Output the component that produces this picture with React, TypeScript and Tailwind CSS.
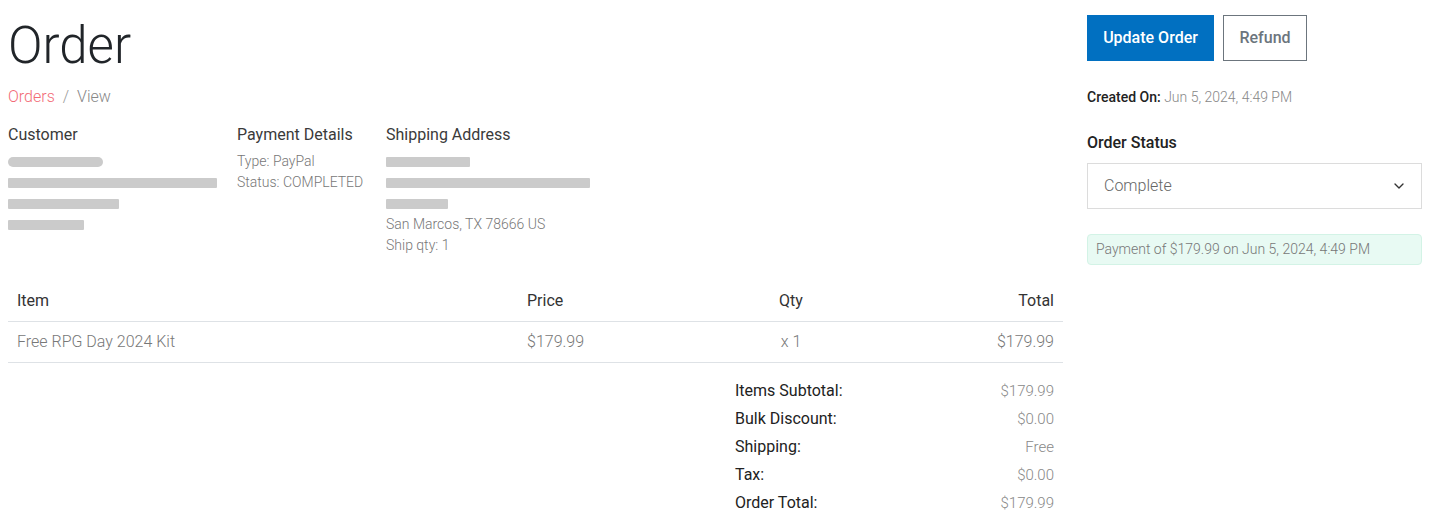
import { ChevronDown } from "lucide-react";

const Redact = ({ w, pill = false }: { w: number; pill?: boolean }) => (
  <div className="h-[21px] flex items-center">
    <div
      className={`h-[10px] bg-[#cbcbcb] ${pill ? "rounded-full" : "rounded-[1px]"}`}
      style={{ width: w }}
    />
  </div>
);

const Line = ({ children }: { children: React.ReactNode }) => (
  <div className="h-[21px] leading-[21px] text-[14px] font-light text-[#777]">{children}</div>
);

const totals = [
  ["Items Subtotal:", "$179.99"],
  ["Bulk Discount:", "$0.00"],
  ["Shipping:", "Free"],
  ["Tax:", "$0.00"],
  ["Order Total:", "$179.99"],
];

export default function App() {
  return (
    <div className="flex gap-6 px-2 bg-white font-['Roboto',sans-serif] text-[#212529] min-h-[531px]">
      {/* left side */}
      <div className="w-[1055px] shrink-0">
        <h1 className="mt-[15px] text-[51px] leading-[1.2] font-light text-[#212529]">Order</h1>
        <div className="mt-[9px] h-6 leading-6 text-base font-light">
          <span className="text-[#f26b76]">Orders</span>
          <span className="text-[#999] mx-2">/</span>
          <span className="text-[#888]">View</span>
        </div>

        <div className="mt-[14px] flex">
          <div className="w-[229px]">
            <div className="h-6 leading-6 text-base text-[#3a3a3a]">Customer</div>
            <div className="mt-1">
              <Redact w={95} pill />
              <Redact w={209} />
              <Redact w={111} />
              <Redact w={76} />
            </div>
          </div>
          <div className="w-[149px]">
            <div className="h-6 leading-6 text-base text-[#3a3a3a]">Payment Details</div>
            <div className="mt-1">
              <Line>Type: PayPal</Line>
              <Line>Status: COMPLETED</Line>
            </div>
          </div>
          <div>
            <div className="h-6 leading-6 text-base text-[#3a3a3a]">Shipping Address</div>
            <div className="mt-1">
              <Redact w={84} />
              <Redact w={204} />
              <Redact w={62} />
              <Line>San Marcos, TX 78666 US</Line>
              <Line>Ship qty: 1</Line>
            </div>
          </div>
        </div>

        <div className="mt-[25px]">
          <div className="grid grid-cols-[511px_1fr_1fr_1fr] h-[41px] items-center border-b border-[#dee2e6] text-base text-[#333]">
            <div className="px-[9px]">Item</div>
            <div className="px-2">Price</div>
            <div className="text-center">Qty</div>
            <div className="text-right pr-[9px]">Total</div>
          </div>
          <div className="grid grid-cols-[511px_1fr_1fr_1fr] h-[41px] items-center border-b border-[#dee2e6] text-base font-light text-[#777]">
            <div className="px-[9px]">Free RPG Day 2024 Kit</div>
            <div className="px-2">$179.99</div>
            <div className="text-center">x 1</div>
            <div className="text-right pr-[9px]">$179.99</div>
          </div>
        </div>

        <div className="mt-[14px] ml-auto w-[328px] pr-[9px]">
          {totals.map(([label, value]) => (
            <div key={label} className="flex justify-between items-center h-7">
              <span className="text-base text-[#222]">{label}</span>
              <span className="text-[15px] font-light text-[#888]">{value}</span>
            </div>
          ))}
        </div>
      </div>

      {/* right side */}
      <div className="w-[335px] shrink-0 pt-[15px]">
        <div className="flex gap-[9px]">
          <button className="h-[46px] w-[127px] bg-[#0170c1] text-white text-base font-medium">
            Update Order
          </button>
          <button className="h-[46px] w-[84px] border border-[#6c757d] text-[#6c757d] text-base font-medium">
            Refund
          </button>
        </div>
        <div className="mt-[26px] h-5 leading-5 text-[14px]">
          <span className="font-medium text-[#222]">Created On: </span>
          <span className="font-light text-[#888]">Jun 5, 2024, 4:49 PM</span>
        </div>
        <div className="mt-6 h-6 leading-6 text-base font-medium text-[#222]">Order Status</div>
        <div className="mt-[8px] h-[46px] border border-[#dcdcdc] flex items-center justify-between pl-4 pr-[14px]">
          <span className="text-base font-light text-[#666]">Complete</span>
          <ChevronDown size={16} strokeWidth={2} className="text-[#333]" />
        </div>
        <div className="mt-[25px] h-[31px] rounded-[4px] bg-[#e8faf3] border border-[#d3f3e6] flex items-center px-2 text-[14px] font-light text-[#777]">
          Payment of $179.99 on Jun 5, 2024, 4:49 PM
        </div>
      </div>
    </div>
  );
}
